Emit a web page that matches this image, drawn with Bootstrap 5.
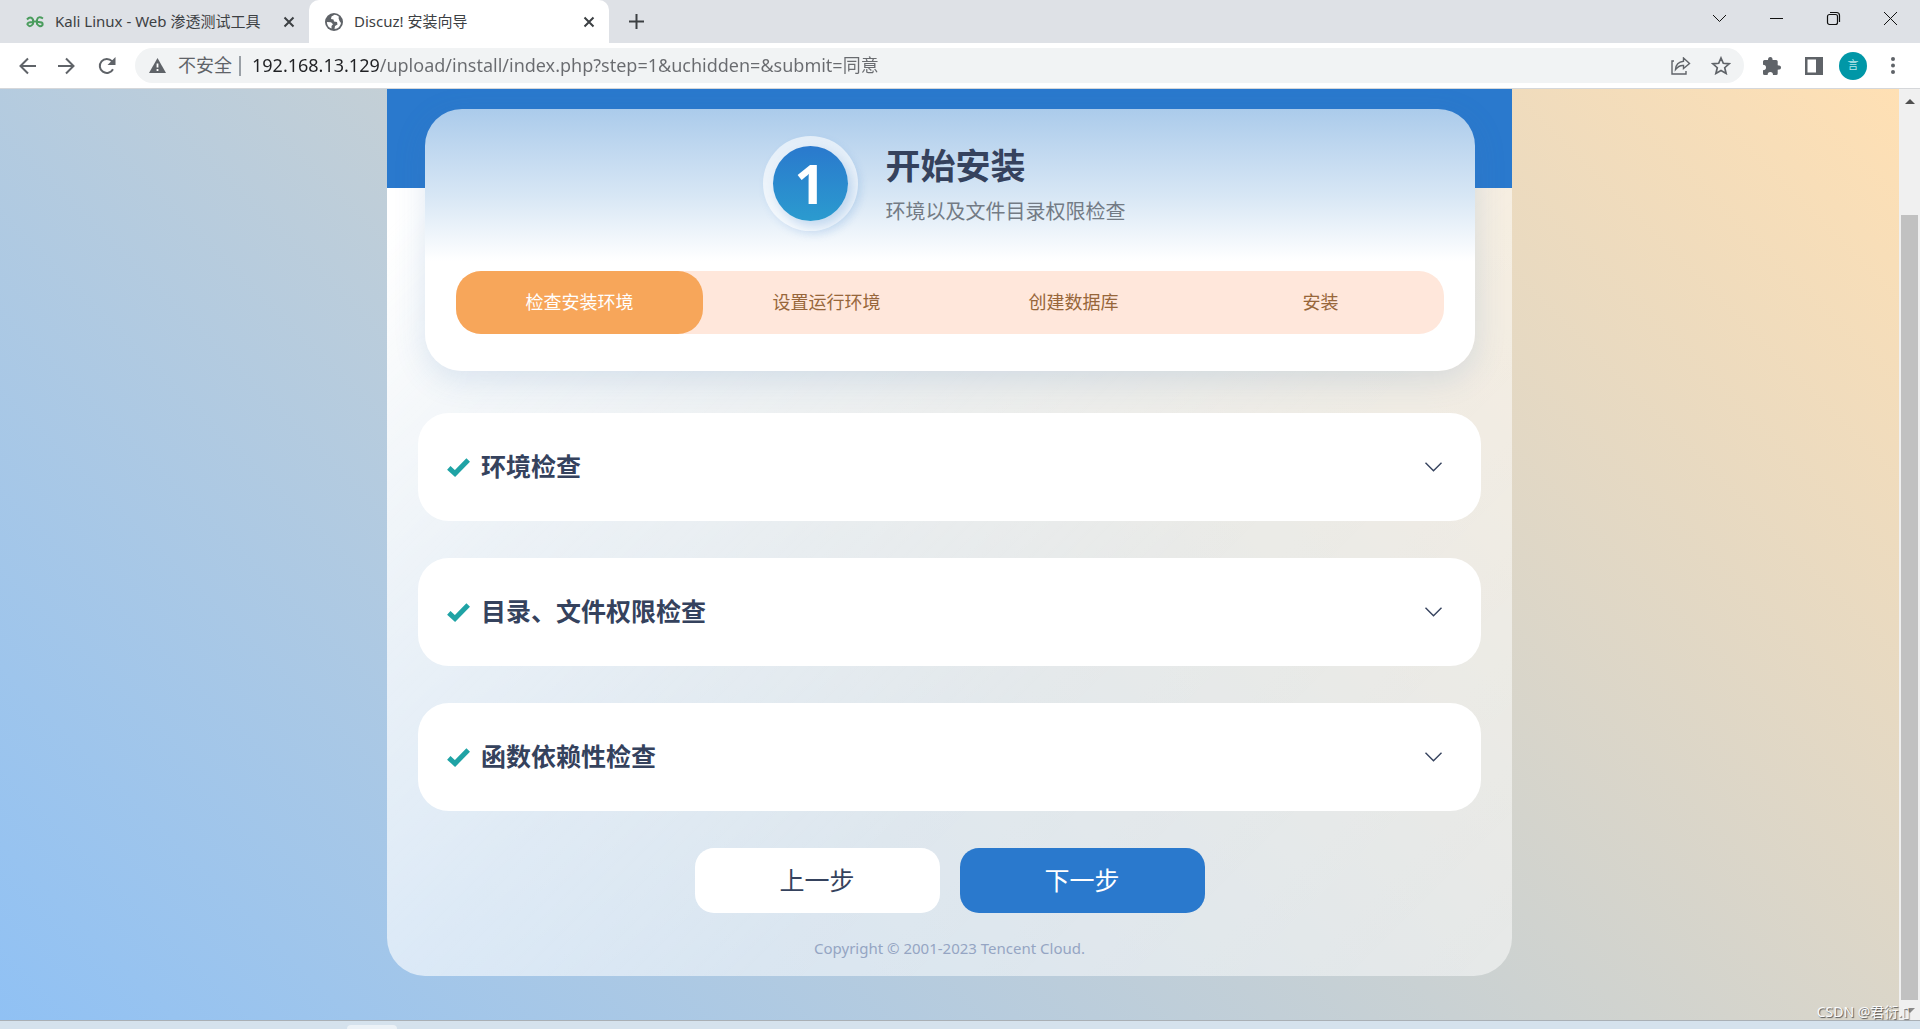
<!DOCTYPE html>
<html lang="zh-CN">
<head>
<meta charset="utf-8">
<meta name="viewport" content="width=device-width, initial-scale=1">
<title>Discuz! 安装向导</title>
<link href="https://cdn.jsdelivr.net/npm/bootstrap@5.3.0/dist/css/bootstrap.min.css" rel="stylesheet">
<style>
  body { font-family: "Noto Sans", "Noto Sans CJK SC", sans-serif; color: #35425d; }
  svg { display: block; flex: none; }
  a { color: inherit; text-decoration: none; }
  .icon-btn { border: 0; padding: 0; background: none; color: #5f6368; display: block; }

  /* browser chrome */
  .tab-strip { background: #dee1e6; height: 43px; font-size: 15px; color: #3c4043; }
  .tab-item { width: 300px; padding: 0 14px 0 16px; }
  .tab-item.idle { width: 309px; padding-left: 26px; }
  .tab-item.current { background: #fff; border-radius: 10px 10px 0 0; }
  .tab-label { white-space: nowrap; margin-left: 11px; }
  .win-controls { gap: 42px; padding-right: 22px; padding-bottom: 6px; }
  .win-controls .icon-btn { color: #111; }
  .toolbar { height: 46px; padding: 0 25px 0 18px; border-bottom: 1px solid #d5d7da; background: #fff; }
  .nav-icons { gap: 22px; }
  .omnibox { height: 35px; border-radius: 18px; background: #f1f3f4; padding: 0 13px 0 14px; margin: 0 19px 0 19px; font-size: 18px; color: #5f6368; }
  .omnibox input { border: 0; padding: 0; outline: 0; min-width: 0; color: transparent;
    background: linear-gradient(90deg, #202124 128px, #696b6f 128px); -webkit-background-clip: text; background-clip: text; }
  .divider { width: 2px; height: 20px; background: #9aa0a6; margin: 0 11px 0 7px; }
  .avatar { width: 28px; height: 28px; border-radius: 50%; background: #0097a7; color: #b9e6ea; font-size: 11px; }

  /* installer page */
  .page-view { background: linear-gradient(45deg, #90c1f4, #ffe0b4); }
  .installer { max-width: 1125px; border-radius: 0 0 38px 38px; padding: 20px 31px 17px;
    background:
      linear-gradient(#2a79cd, #2a79cd) top / 100% 99px no-repeat,
      linear-gradient(135deg, #fff 7%, rgba(255,255,255,.86) 17%, rgba(255,255,255,.74) 28%, rgba(255,255,255,.62) 44%, rgba(255,255,255,.53) 62%, rgba(255,255,255,.5)); }
  .step-card { margin: 0 6px 42px 7px; border-radius: 37px; padding: 27px 31px 37px;
    background: linear-gradient(#abcbeb, #d8e7f5 88px, #fff 152px); box-shadow: 0 8px 32px rgba(60,120,180,.16); }
  .step-head { gap: 28px; margin-bottom: 40px; padding-right: 12px; }
  .num-ring { width: 95px; height: 95px; border-radius: 50%; background: rgba(255,255,255,.6); box-shadow: 3px 4px 8px rgba(42,121,205,.1); }
  .num-disc { width: 75px; height: 75px; border-radius: 50%; background: linear-gradient(#2a79cd, #2b9bcf); color: #fff;
    font-size: 54px; font-weight: 700; line-height: 75px; box-shadow: 5px 6px 12px rgba(42,121,205,.25); }
  .step-title { font-size: 35px; line-height: 44px; font-weight: 700; margin: 0 0 12px; }
  .step-sub { font-size: 20px; line-height: 24px; margin: 0; color: #737b85; }
  .step-bar { background: #ffe7db; border-radius: 25px; font-size: 18px; line-height: 63px; color: #97663a; list-style: none; padding: 0; margin: 0; }
  .step-bar li { flex: 1 1 0; text-align: center; }
  .step-bar .now { background: #f7a65a; color: #fff; border-radius: 25px; }
  .check-panel { width: 100%; border: 0; background: #fff; border-radius: 31px; height: 108px; padding: 0 39px 0 29px; color: #35425d; font-size: 25px; font-weight: 700; }
  .check-panel span { margin-left: 11px; }
  .check-list { gap: 37px; }
  .button-row { gap: 20px; }
  .nav-btn { width: 245px; height: 65px; border: 0; border-radius: 19px; font-size: 25px; background: #fff; color: #35425d; }
  .nav-btn.next { background: #2a79cd; color: #fff; }
  .copy { font-size: 15px; line-height: 22px; color: #95a5c3; margin: 24px 0 0; }

  .scroll-rail { width: 21px; background: #f0f0f0; padding: 10px 2px 7px; }
  .scroll-thumb { background: #c1c1c1; margin-top: 111px; }
  .watermark { right: 10px; bottom: 0; font-size: 14px; line-height: 17px; color: #fafafa; text-shadow: 1px 1px 1px #555; }
  .task-edge { height: 9px; border-top: 1px solid #aab0b5; background: #d5e2ed; padding-left: 347px; }
  .task-edge span { display: block; width: 50px; height: 4px; margin-top: 4px; border-radius: 4px 4px 0 0; background: #ecf2f7; }
</style>
</head>
<body class="vh-100 d-flex flex-column overflow-hidden">

<header>
  <div class="tab-strip d-flex">
    <div class="tab-item idle d-flex align-items-center">
      <svg width="18" height="12" viewBox="0 0 18 12" fill="none" stroke="#4a9c5d" stroke-width="2"><path d="M1 3.500Q4.500-.5 7 3.500V8Q4 12 1.500 8.500Q1 6 7 6M17 2.500Q12-.5 11 4V8Q14 12 16.500 9Q17.500 5.500 11 6M7 5.500h4"/></svg>
      <a href="#" class="tab-label">Kali Linux - Web 渗透测试工具</a>
      <button class="icon-btn ms-auto" aria-label="关闭标签页"><svg width="12" height="12" viewBox="0 0 12 12" stroke="#3c4043" stroke-width="2"><path d="M1.500 1.500l9 9M10.500 1.500l-9 9"/></svg></button>
    </div>
    <div class="tab-item current d-flex align-items-center">
      <svg width="18" height="18" viewBox="0 0 18 18"><circle cx="9" cy="9" r="9" fill="#5f6368"/><path d="M9.500 1.800L6.500 3.500 6 6 8.500 6.500 9 8.500 12 9 12.500 11.500 10 13 9.500 16Q15 15.500 16 10L14.500 8 13.500 5 14 3.800Q12 2 9.500 1.800zM1.900 9L6 9.300 8 11.200 6.500 13 6.500 15.500Q2 14 1.900 9z" fill="#fff"/></svg>
      <a href="#" class="tab-label">Discuz! 安装向导</a>
      <button class="icon-btn ms-auto" aria-label="关闭标签页"><svg width="12" height="12" viewBox="0 0 12 12" stroke="#3c4043" stroke-width="2"><path d="M1.500 1.500l9 9M10.500 1.500l-9 9"/></svg></button>
    </div>
    <button class="icon-btn align-self-center ms-3 ps-1" aria-label="新标签页"><svg width="15" height="15" viewBox="0 0 15 15" stroke="#3c4043" stroke-width="2"><path d="M7.500 0v15M0 7.500h15"/></svg></button>
    <div class="win-controls d-flex align-items-center ms-auto">
      <button class="icon-btn" aria-label="搜索标签页"><svg width="15" height="15" viewBox="0 0 15 15" fill="none" stroke="currentColor"><path d="M1 4l6.500 6.500L14 4"/></svg></button>
      <button class="icon-btn" aria-label="最小化"><svg width="15" height="15" viewBox="0 0 15 15" stroke="currentColor"><path d="M1 7.500h13"/></svg></button>
      <button class="icon-btn" aria-label="还原"><svg width="15" height="15" viewBox="0 0 15 15" fill="none" stroke="currentColor" stroke-width="1.200"><rect x="1.500" y="3.500" width="10" height="10" rx="2"/><path d="M4 1.500h6.500a3 3 0 0 1 3 3V11"/></svg></button>
      <button class="icon-btn" aria-label="关闭"><svg width="15" height="15" viewBox="0 0 15 15" stroke="currentColor"><path d="M1 1l13 13M14 1L1 14"/></svg></button>
    </div>
  </div>

  <div class="toolbar d-flex align-items-center">
    <div class="nav-icons d-flex">
      <button class="icon-btn" aria-label="后退"><svg width="18" height="18" viewBox="0 0 18 18" fill="none" stroke="currentColor" stroke-width="2"><path d="M18 9H2.500M10 1.500L2.500 9l7.500 7.500"/></svg></button>
      <button class="icon-btn" aria-label="前进"><svg width="18" height="18" viewBox="0 0 18 18" fill="none" stroke="currentColor" stroke-width="2"><path d="M0 9h15.500M8 1.500L15.500 9 8 16.500"/></svg></button>
      <button class="icon-btn" aria-label="重新加载"><svg width="18" height="18" viewBox="0 0 18 18" fill="none" stroke="currentColor" stroke-width="2"><path d="M15 12.200A7 7 0 1 1 14 4.200L16 6.500"/><path d="M17.500 0v8h-8z" fill="currentColor" stroke="none"/></svg></button>
    </div>
    <form class="omnibox d-flex align-items-center flex-grow-1">
      <svg width="17" height="15" viewBox="0 0 17 15"><path d="M8.500 0L17 15H0z" fill="#5f6368"/><path d="M8.500 5.500v4M8.500 11v2" stroke="#fff" stroke-width="1.800"/></svg>
      <label for="url" class="ms-2 ps-1">不安全</label>
      <span class="divider"></span>
      <input id="url" class="flex-grow-1" type="text" value="192.168.13.129/upload/install/index.php?step=1&amp;uchidden=&amp;submit=同意">
      <button type="button" class="icon-btn me-3" aria-label="分享"><svg width="20" height="18" viewBox="0 0 20 18" fill="none" stroke="currentColor" stroke-width="1.400"><path d="M3 4H1v13h14v-3"/><path d="M12.500 1l6 5.500-6 5V8.500Q8 8 4.500 12.500 5 5 12.500 4.200z"/></svg></button>
      <button type="button" class="icon-btn ms-1" aria-label="收藏"><svg width="20" height="19" viewBox="0 0 20 19" fill="none" stroke="currentColor" stroke-width="1.700"><path d="M10 2l2.300 5.300 5.900.5-4.500 3.900 1.400 5.700L10 14.400l-5.100 3 1.400-5.700L1.800 7.800l5.900-.5z"/></svg></button>
    </form>
    <div class="d-flex align-items-center">
      <button class="icon-btn" aria-label="扩展程序"><svg width="18" height="18" viewBox="0 0 18 18" fill="currentColor"><path d="M0 4.500Q0 3 1.500 3H5Q5 0 7.300 0T9.600 3h3.600Q14.700 3 14.700 4.500v3.700Q18 8.200 18 10.500t-3.300 2.300v3.700q0 1.500-1.500 1.500H10q0-3-2.700-3T4.600 18H1.500Q0 18 0 16.500v-3.300q3 0 3-2.700T0 7.800z"/></svg></button>
      <button class="icon-btn ms-4" aria-label="侧边栏"><svg width="18" height="18" viewBox="0 0 18 18"><path d="M0 0h18v18H0zM2.500 2.500v13H11v-13z" fill="currentColor" fill-rule="evenodd"/></svg></button>
      <button class="avatar border-0 p-0 ms-3 me-4" aria-label="个人资料">言</button>
      <button class="icon-btn" aria-label="菜单"><svg width="4" height="17" viewBox="0 0 4 17" fill="currentColor"><circle cx="2" cy="2" r="2"/><circle cx="2" cy="8.500" r="2"/><circle cx="2" cy="15" r="2"/></svg></button>
    </div>
  </div>
</header>

<div class="d-flex flex-grow-1 position-relative">
  <main class="page-view flex-grow-1">
    <div class="installer mx-auto">
      <section class="step-card">
        <div class="step-head d-flex justify-content-center align-items-center">
          <div class="num-ring d-flex align-items-center justify-content-center"><div class="num-disc text-center">1</div></div>
          <div>
            <h1 class="step-title">开始安装</h1>
            <p class="step-sub">环境以及文件目录权限检查</p>
          </div>
        </div>
        <ol class="step-bar d-flex">
          <li class="now">检查安装环境</li><li>设置运行环境</li><li>创建数据库</li><li>安装</li>
        </ol>
      </section>

      <div class="check-list d-flex flex-column">
        <button class="check-panel d-flex align-items-center" aria-expanded="false">
          <svg width="23" height="19" viewBox="0 0 23 19" fill="none" stroke="#1fa3a5" stroke-width="5"><path d="M1.800 9.800L8 15.500 21.200 2"/></svg>
          <span>环境检查</span>
          <svg class="ms-auto" width="17" height="10" viewBox="0 0 17 10" fill="none" stroke="#35425d" stroke-width="1.400"><path d="M.5.8l8 8 8-8"/></svg>
        </button>
        <button class="check-panel d-flex align-items-center" aria-expanded="false">
          <svg width="23" height="19" viewBox="0 0 23 19" fill="none" stroke="#1fa3a5" stroke-width="5"><path d="M1.800 9.800L8 15.500 21.200 2"/></svg>
          <span>目录、文件权限检查</span>
          <svg class="ms-auto" width="17" height="10" viewBox="0 0 17 10" fill="none" stroke="#35425d" stroke-width="1.400"><path d="M.5.8l8 8 8-8"/></svg>
        </button>
        <button class="check-panel d-flex align-items-center" aria-expanded="false">
          <svg width="23" height="19" viewBox="0 0 23 19" fill="none" stroke="#1fa3a5" stroke-width="5"><path d="M1.800 9.800L8 15.500 21.200 2"/></svg>
          <span>函数依赖性检查</span>
          <svg class="ms-auto" width="17" height="10" viewBox="0 0 17 10" fill="none" stroke="#35425d" stroke-width="1.400"><path d="M.5.8l8 8 8-8"/></svg>
        </button>
        <div class="button-row d-flex justify-content-center">
          <button class="nav-btn">上一步</button>
          <button class="nav-btn next">下一步</button>
        </div>
      </div>
      <p class="copy text-center">Copyright © 2001-2023 Tencent Cloud.</p>
    </div>
  </main>
  <div class="scroll-rail d-flex flex-column align-items-center">
    <svg width="10" height="5" viewBox="0 0 10 5"><path d="M0 5l5-5 5 5z" fill="#505050"/></svg>
    <div class="scroll-thumb w-100 flex-grow-1"></div>
    <svg class="mt-2" width="10" height="5" viewBox="0 0 10 5"><path d="M0 0l5 5 5-5z" fill="#8a8a8a"/></svg>
  </div>
  <div class="watermark position-absolute">CSDN @君衍.▯</div>
</div>
<footer class="task-edge"><span></span></footer>

<script src="https://cdn.jsdelivr.net/npm/bootstrap@5.3.0/dist/js/bootstrap.bundle.min.js"></script>
</body>
</html>
